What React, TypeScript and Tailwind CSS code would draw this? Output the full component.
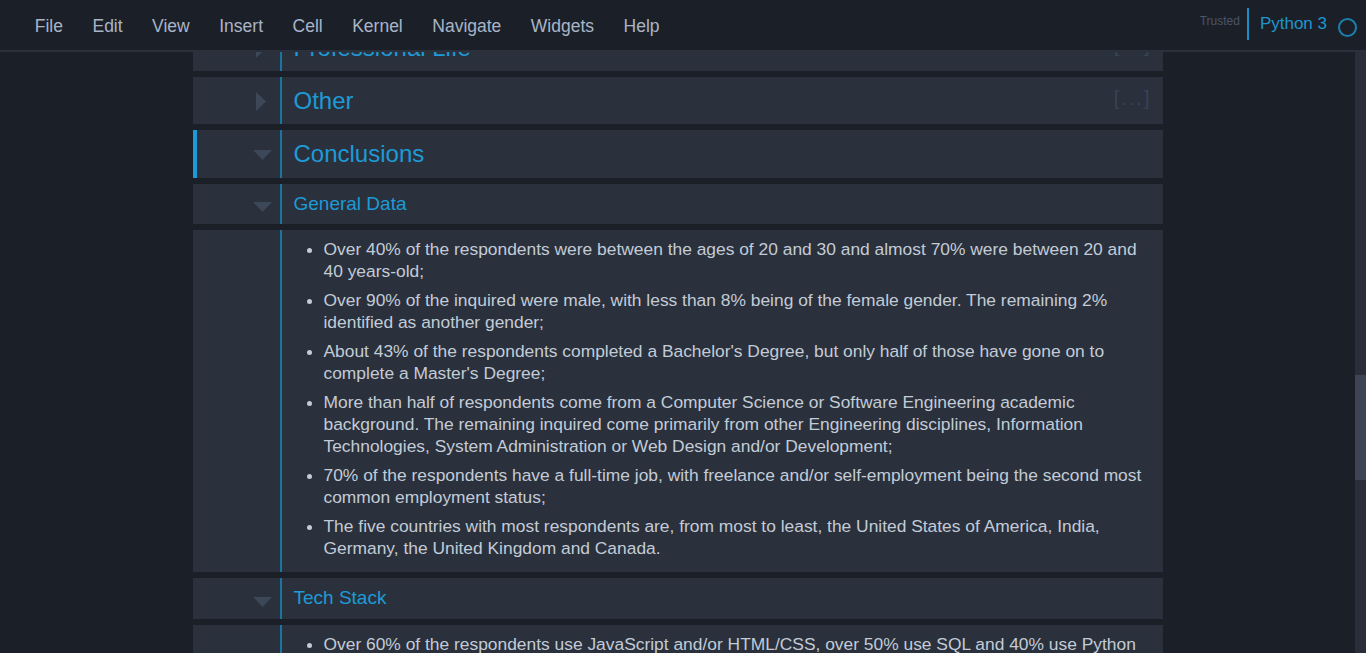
const menu = ['File', 'Edit', 'View', 'Insert', 'Cell', 'Kernel', 'Navigate', 'Widgets', 'Help'];

const generalData = [
  'Over 40% of the respondents were between the ages of 20 and 30 and almost 70% were between 20 and 40 years-old;',
  'Over 90% of the inquired were male, with less than 8% being of the female gender. The remaining 2% identified as another gender;',
  "About 43% of the respondents completed a Bachelor's Degree, but only half of those have gone on to complete a Master's Degree;",
  'More than half of respondents come from a Computer Science or Software Engineering academic background. The remaining inquired come primarily from other Engineering disciplines, Information Technologies, System Administration or Web Design and/or Development;',
  '70% of the respondents have a full-time job, with freelance and/or self-employment being the second most common employment status;',
  'The five countries with most respondents are, from most to least, the United States of America, India, Germany, the United Kingdom and Canada.',
];

const techStack = [
  'Over 60% of the respondents use JavaScript and/or HTML/CSS, over 50% use SQL and 40% use Python and/or Java;',
];

function Triangle({ open }: { open: boolean }) {
  return open ? (
    <svg width="19" height="10" viewBox="0 0 19 10">
      <polygon points="0,0 19,0 9.5,10" fill="#3c4758" />
    </svg>
  ) : (
    <svg width="10" height="19" viewBox="0 0 10 19">
      <polygon points="0,0 10,9.5 0,19" fill="#3c4758" />
    </svg>
  );
}

function HeadingCell({
  title,
  level,
  open,
  selected,
  ellipsis,
  height,
}: {
  title: string;
  level: 1 | 2;
  open: boolean;
  selected?: boolean;
  ellipsis?: boolean;
  height: string;
}) {
  return (
    <div className={`shrink-0 flex bg-[#2a313c] ${height}`}>
      <div
        className={`w-[87px] shrink-0 flex items-center justify-end ${open ? 'pr-[8px]' : 'pr-[14px]'} ${
          selected ? 'border-l-4 border-[#1a9ad6]' : ''
        } ${level === 2 ? 'pt-[6px]' : 'pt-[2px]'}`}
      >
        <Triangle open={open} />
      </div>
      <div className="w-[2px] bg-[#1a73a1]" />
      <div className="flex-1 flex items-center justify-between pl-[12px] pr-[11px]">
        <span className={`text-[#1e9ad6] ${level === 1 ? 'text-[24px]' : 'text-[19px]'}`}>{title}</span>
        {ellipsis && (
          <span className="text-[20px] tracking-[2px] text-[#37435a] -mt-[6px]">[...]</span>
        )}
      </div>
    </div>
  );
}

function MarkdownCell({ items }: { items: string[] }) {
  return (
    <div className="shrink-0 flex bg-[#2a313c]">
      <div className="w-[87px] shrink-0" />
      <div className="w-[2px] bg-[#1a73a1]" />
      <div className="flex-1 pl-[12px] pr-[13px] pt-[8px] pb-[13px]">
        <ul className="list-disc pl-[30px] text-[17.4px] leading-[22px] text-[#c3cbd7] marker:text-[#c3cbd7]">
          {items.map((item, i) => (
            <li key={i} className={i > 0 ? 'mt-[7px]' : ''}>
              {item}
            </li>
          ))}
        </ul>
      </div>
    </div>
  );
}

export default function App() {
  return (
    <div
      className="h-screen flex flex-col bg-[#1b2028] overflow-hidden"
      style={{ fontFamily: '"Liberation Sans", Arial, sans-serif' }}
    >
      <header className="h-[52px] shrink-0 flex items-center justify-between border-b-2 border-[#2b313c] bg-[#1b2028]">
        <nav className="flex pl-[20px] pt-[3px]">
          {menu.map((m) => (
            <span key={m} className="px-[14.75px] text-[17.5px] text-[#a9b5c7]">
              {m}
            </span>
          ))}
        </nav>
        <div className="flex items-center h-full pr-[9px]">
          <span className="self-start mt-[12px] text-[12px] text-[#4a5467]">Trusted</span>
          <div className="ml-[7px] w-[2px] h-[32px] bg-[#1a8fc7] -mt-[2px]" />
          <span className="ml-[11px] text-[17px] text-[#1e95cf] -mt-[3px]">Python 3</span>
          <div className="ml-[11px] w-[19px] h-[19px] rounded-full border-2 border-[#1a7fae] mt-[4px]" />
        </div>
      </header>
      <div className="flex-1 flex min-h-0">
        <main className="flex-1 flex justify-center overflow-hidden">
          <div className="w-[970px] flex flex-col gap-[6px] -mt-[28px]">
            <HeadingCell title="Professional Life" level={1} open={false} ellipsis height="h-[47px]" />
            <HeadingCell title="Other" level={1} open={false} ellipsis height="h-[47px]" />
            <HeadingCell title="Conclusions" level={1} open selected height="h-[48px]" />
            <HeadingCell title="General Data" level={2} open height="h-[40px]" />
            <MarkdownCell items={generalData} />
            <HeadingCell title="Tech Stack" level={2} open height="h-[41px]" />
            <MarkdownCell items={techStack} />
          </div>
        </main>
        <div className="w-[11px] shrink-0 bg-[#2b2e3a]">
          <div className="mt-[323px] h-[105px] bg-[#3f4455]" />
        </div>
      </div>
    </div>
  );
}
